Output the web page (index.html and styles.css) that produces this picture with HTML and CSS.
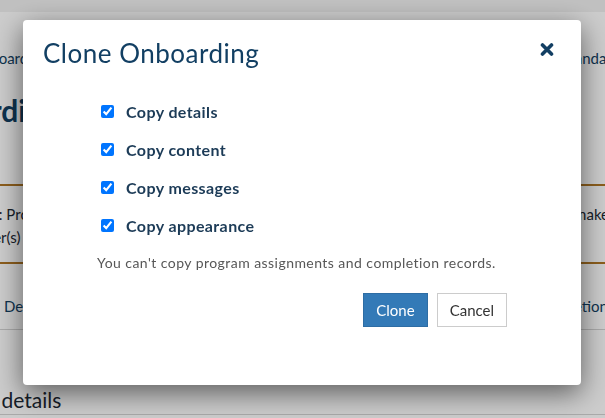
FILE: index.html
```html
<!DOCTYPE html>
<html>
<head>
	<meta charset="utf-8">
	<title>Clone Onboarding</title>
	<link rel="stylesheet" href="styles.css">
</head>
<body>
	<div class="topbar"></div>
	<div class="page">
		<div class="crumbs">
			<span class="crumb-left">Onboarding</span>
			<span class="crumb-right">Standard</span>
		</div>
		<h1 class="page-title">Onboarding</h1>
		<div class="summary">
			<div class="summary-row">
				<span>Status: Program</span>
				<span class="summary-right">make</span>
			</div>
			<div class="summary-row second">
				<span>User(s)</span>
			</div>
		</div>
		<div class="tabs">
			<span class="tab-left">Details</span>
			<span class="tab-right">Completion</span>
		</div>
		<h2 class="section-title">Onboarding details</h2>
	</div>

	<div class="backdrop"></div>
	<div class="modal">
		<div class="modal-header">
			<h3 class="modal-title">Clone Onboarding</h3>
			<button class="close" aria-label="Close">
				<svg width="14" height="13" viewBox="0 0 14 13">
					<path d="M2.5 2 L11.5 11 M11.5 2 L2.5 11" stroke="#123f63" stroke-width="3.6" stroke-linecap="round"/>
				</svg>
			</button>
		</div>
		<div class="modal-body">
			<label class="option"><input type="checkbox" checked> Copy details</label>
			<label class="option"><input type="checkbox" checked> Copy content</label>
			<label class="option"><input type="checkbox" checked> Copy messages</label>
			<label class="option"><input type="checkbox" checked> Copy appearance</label>
			<p class="note">You can't copy program assignments and completion records.</p>
			<div class="actions">
				<button class="btn btn-primary">Clone</button>
				<button class="btn btn-default">Cancel</button>
			</div>
		</div>
	</div>
</body>
</html>
```

FILE: styles.css
```css
*{
	padding: 0;
	margin: 0;
	box-sizing: border-box;
}
html, body{
	height: 100%;
	overflow: hidden;
}
body{
	background: #ffffff;
	font-family: "Lato", "Noto Sans", sans-serif;
	color: #123f63;
}
.topbar{
	height: 12px;
	background: #f1f1f1;
}
.page{
	margin-left: -36px;
	width: 690px;
}
.crumbs{
	display: flex;
	justify-content: space-between;
	font-size: 15px;
	padding-top: 37px;
	height: 70px;
}
.crumb-left{
	margin-left: 6px;
}
.crumb-right{
	margin-right: 34px;
}
.page-title{
	font-size: 30px;
	font-weight: 700;
	margin-left: -64px;
	height: 102px;
	padding-top: 10px;
}
.summary{
	border-top: 2px solid #b07624;
	border-bottom: 2px solid #b07624;
	padding: 17px 0 14px;
	font-size: 15px;
	line-height: 23px;
	color: #1b2733;
	height: 80px;
}
.summary-row{
	display: flex;
	justify-content: space-between;
	margin-left: -6px;
}
.summary-row.second{
	margin-left: 12px;
}
.summary-right{
	margin-right: 45px;
}
.tabs{
	display: flex;
	justify-content: space-between;
	font-size: 15px;
	padding-top: 33px;
	height: 66px;
	border-bottom: 1px solid #d4d4d4;
}
.tab-left{
	margin-left: 40px;
}
.tab-right{
	margin-right: 46px;
}
.section-title{
	font-size: 21px;
	font-weight: 400;
	color: #1b2733;
	margin-top: 57px;
	margin-left: -77px;
	height: 28px;
	border-bottom: 1px solid #d4d4d4;
	width: 780px;
}
.backdrop{
	position: fixed;
	inset: 0;
	background: rgba(0, 0, 0, 0.2);
}
.modal{
	position: fixed;
	top: 20px;
	left: 23px;
	width: 558px;
	height: 365px;
	background: #ffffff;
	border-radius: 4px;
	box-shadow: 0 8px 28px rgba(0, 0, 0, 0.55);
}
.modal-header{
	display: flex;
	justify-content: space-between;
	align-items: flex-start;
	padding: 17px 27px 0 20px;
}
.modal-title{
	font-size: 26px;
	font-weight: 400;
	letter-spacing: 0.5px;
	line-height: 32px;
	color: #123f63;
}
.close{
	border: none;
	background: none;
	margin-top: 6px;
	line-height: 0;
}
.modal-body{
	padding: 23px 74px 0;
}
.option{
	display: flex;
	align-items: center;
	gap: 12px;
	height: 38px;
	font-size: 16px;
	font-weight: 700;
	letter-spacing: 0.4px;
	color: #1c3b57;
}
.option input{
	width: 13px;
	height: 13px;
	margin-left: 4px;
}
.note{
	font-size: 14px;
	letter-spacing: 0.45px;
	line-height: 20px;
	color: #575757;
	margin-top: 9px;
}
.actions{
	display: flex;
	justify-content: flex-end;
	gap: 9px;
	margin-top: 20px;
}
.btn{
	font-family: "Lato", "Noto Sans", sans-serif;
	font-size: 15px;
	height: 34px;
	padding: 0 12px;
	border-radius: 0;
}
.btn-primary{
	background: #337ab7;
	border: 1px solid #2e6da4;
	color: #ffffff;
}
.btn-default{
	background: #ffffff;
	border: 1px solid #cccccc;
	color: #333333;
}
```
